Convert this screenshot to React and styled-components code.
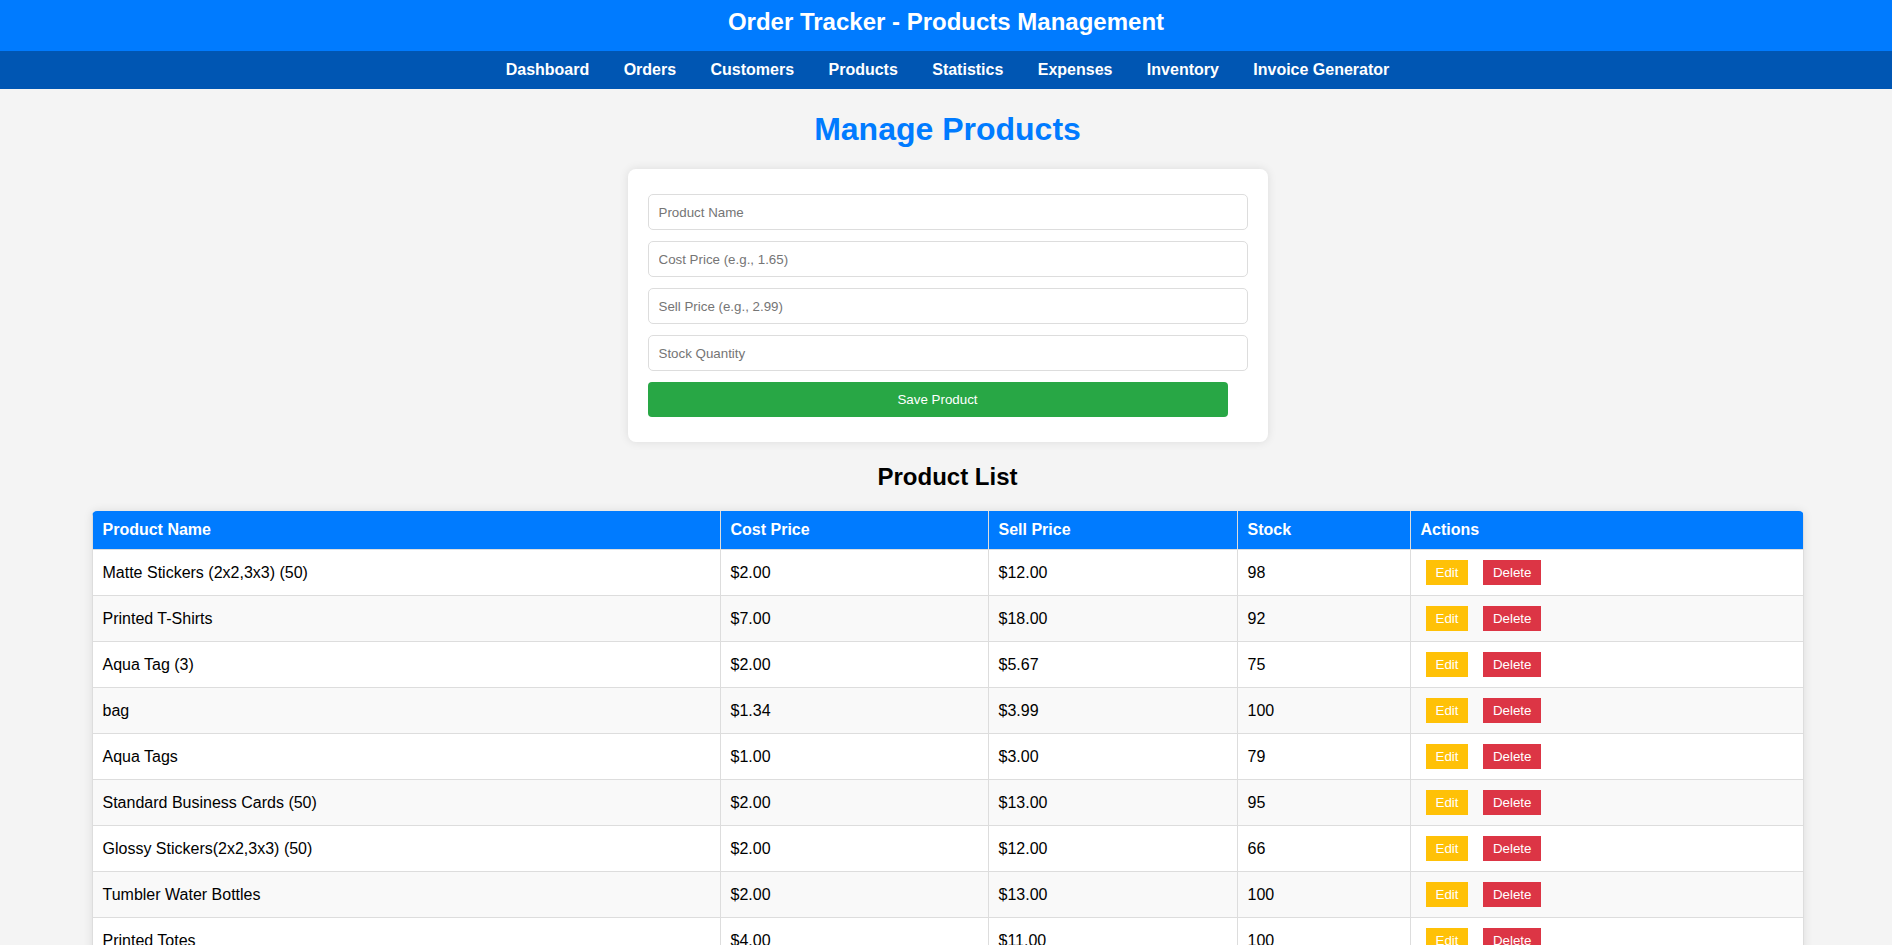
import React from "react";
import styled, { createGlobalStyle } from "styled-components";

const GlobalStyle = createGlobalStyle`
    body {
        margin: 0;
        background-color: #f4f4f4;
        font-family: "Liberation Sans", Arial, sans-serif;
        color: #000;
    }
`;

const Header = styled.header`
    background-color: #007bff;
    color: #fff;
    text-align: center;
    padding: 8px 0 15px;
`;
const Title = styled.h1`
    margin: 0;
    font-size: 24px;
    line-height: 28px;
`;
const Nav = styled.nav`
    background-color: #0056b3;
    display: flex;
    justify-content: center;
    gap: 34.4px;
    height: 38px;
    box-sizing: border-box;
    padding: 10px 0 0 3px;
`;
const NavLink = styled.a`
    color: #fff;
    font-weight: bold;
    font-size: 16px;
    text-decoration: none;
    line-height: 18px;
    cursor: pointer;
`;
const Main = styled.main`
    padding: 0 0 40px 3px;
`;
const PageTitle = styled.h1`
    color: #007bff;
    text-align: center;
    font-size: 32px;
    margin: 22px 0 21px;
    line-height: 37px;
`;
const FormCard = styled.form`
    width: 640px;
    box-sizing: border-box;
    margin: 0 auto;
    background-color: #fff;
    padding: 25px 20px;
    border-radius: 8px;
    box-shadow: 0 0 10px rgba(0, 0, 0, 0.1);
    display: flex;
    flex-direction: column;
    gap: 11px;
`;
const Input = styled.input`
    width: 100%;
    height: 36px;
    box-sizing: border-box;
    padding: 0 10px;
    border: 1px solid #ddd;
    border-radius: 5px;
    font-family: "Liberation Sans", Arial, sans-serif;
    font-size: 13.33px;
    &::placeholder {
        color: #757575;
    }
`;
const SaveButton = styled.button`
    width: 580px;
    height: 35px;
    border: none;
    border-radius: 4px;
    background-color: #28a745;
    color: #fff;
    font-family: "Liberation Sans", Arial, sans-serif;
    font-size: 13.33px;
    cursor: pointer;
`;
const SectionTitle = styled.h2`
    text-align: center;
    font-size: 24px;
    margin: 21px 0 20px;
    line-height: 28px;
`;
const Table = styled.table`
    width: 1711px;
    margin: 0 auto;
    border-collapse: collapse;
    table-layout: fixed;
    background-color: #fff;
    border-radius: 5px;
    overflow: hidden;
    box-shadow: 0 0 10px rgba(0, 0, 0, 0.1);
`;
const Th = styled.th`
    background-color: #007bff;
    color: #fff;
    text-align: left;
    font-size: 16px;
    padding: 10px;
    border: 1px solid #ddd;
    border-top: none;
    line-height: 18px;
`;
const Row = styled.tr`
    background-color: ${(p) => (p.$striped ? "#f9f9f9" : "#fff")};
`;
const Td = styled.td`
    padding: 10px;
    border: 1px solid #ddd;
    font-size: 16px;
    line-height: 18px;
    height: 25px;
`;
const ActionButton = styled.button`
    border: none;
    padding: 5px 10px;
    margin: 0 5px;
    color: #fff;
    font-family: "Liberation Sans", Arial, sans-serif;
    font-size: 13.33px;
    line-height: 15px;
    background-color: ${(p) => (p.$variant === "delete" ? "#dc3545" : "#ffc107")};
    cursor: pointer;
`;

const links = ["Dashboard", "Orders", "Customers", "Products", "Statistics", "Expenses", "Inventory", "Invoice Generator"];

const products = [
    ["Matte Stickers (2x2,3x3) (50)", "$2.00", "$12.00", 98],
    ["Printed T-Shirts", "$7.00", "$18.00", 92],
    ["Aqua Tag (3)", "$2.00", "$5.67", 75],
    ["bag", "$1.34", "$3.99", 100],
    ["Aqua Tags", "$1.00", "$3.00", 79],
    ["Standard Business Cards (50)", "$2.00", "$13.00", 95],
    ["Glossy Stickers(2x2,3x3) (50)", "$2.00", "$12.00", 66],
    ["Tumbler Water Bottles", "$2.00", "$13.00", 100],
    ["Printed Totes", "$4.00", "$11.00", 100],
];

const colWidths = [628, 268, 249, 173, 393];

const App = () => {
    return (
        <>
            <GlobalStyle />
            <Header>
                <Title>Order Tracker - Products Management</Title>
            </Header>
            <Nav>
                {links.map((l) => (
                    <NavLink key={l}>{l}</NavLink>
                ))}
            </Nav>
            <Main>
                <PageTitle>Manage Products</PageTitle>
                <FormCard onSubmit={(e) => e.preventDefault()}>
                    <Input placeholder="Product Name" />
                    <Input placeholder="Cost Price (e.g., 1.65)" />
                    <Input placeholder="Sell Price (e.g., 2.99)" />
                    <Input placeholder="Stock Quantity" />
                    <SaveButton type="submit">Save Product</SaveButton>
                </FormCard>
                <SectionTitle>Product List</SectionTitle>
                <Table>
                    <colgroup>
                        {colWidths.map((w, i) => (
                            <col key={i} style={{ width: w }} />
                        ))}
                    </colgroup>
                    <thead>
                        <tr>
                            <Th>Product Name</Th>
                            <Th>Cost Price</Th>
                            <Th>Sell Price</Th>
                            <Th>Stock</Th>
                            <Th>Actions</Th>
                        </tr>
                    </thead>
                    <tbody>
                        {products.map(([name, cost, sell, stock], i) => (
                            <Row key={name} $striped={i % 2 === 1}>
                                <Td>{name}</Td>
                                <Td>{cost}</Td>
                                <Td>{sell}</Td>
                                <Td>{stock}</Td>
                                <Td>
                                    <ActionButton>Edit</ActionButton>{" "}
                                    <ActionButton $variant="delete">Delete</ActionButton>
                                </Td>
                            </Row>
                        ))}
                    </tbody>
                </Table>
            </Main>
        </>
    );
};

export default App;
